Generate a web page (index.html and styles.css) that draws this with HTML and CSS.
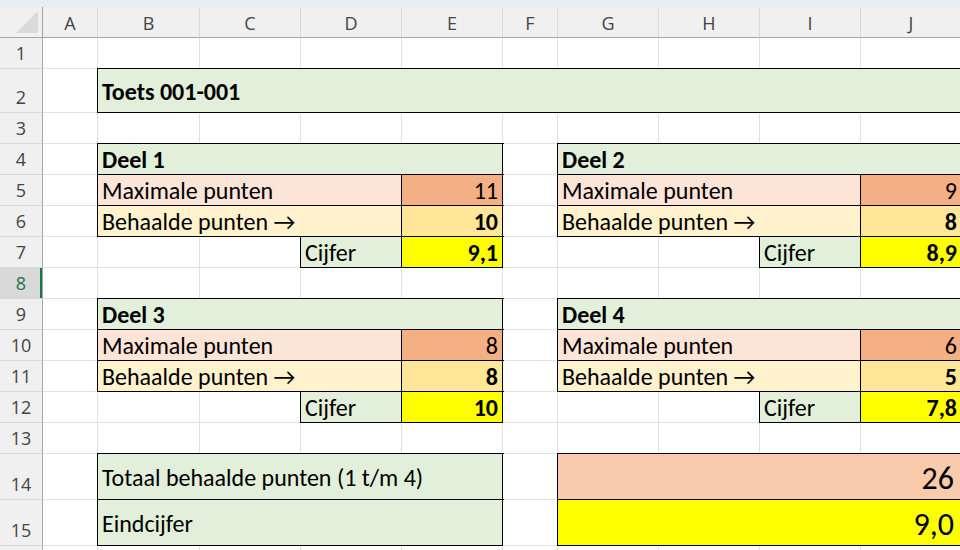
FILE: index.html
```html
<!DOCTYPE html>
<html>
	<head>
		<meta charset="UTF-8">
		<title>Toets 001-001</title>
		<link rel="stylesheet" href="styles.css">
	</head>
	<body>
		<div class="topbar"></div>
		<div class="sheet">
			<!-- kolomkoppen -->
			<div class="corner"><span class="tri"></span></div>
			<div class="ch">A</div><div class="ch">B</div><div class="ch">C</div><div class="ch">D</div><div class="ch">E</div>
			<div class="ch">F</div><div class="ch">G</div><div class="ch">H</div><div class="ch">I</div><div class="ch">J</div>

			<!-- 1 -->
			<div class="rh">1</div>
			<div class="c"></div><div class="c"></div><div class="c"></div><div class="c"></div><div class="c"></div>
			<div class="c"></div><div class="c"></div><div class="c"></div><div class="c"></div><div class="c"></div>

			<!-- 2 -->
			<div class="rh">2</div>
			<div class="c"></div>
			<div class="c box grn b span9">Toets 001-001</div>

			<!-- 3 -->
			<div class="rh">3</div>
			<div class="c"></div><div class="c"></div><div class="c"></div><div class="c"></div><div class="c"></div>
			<div class="c"></div><div class="c"></div><div class="c"></div><div class="c"></div><div class="c"></div>

			<!-- 4 -->
			<div class="rh">4</div>
			<div class="c"></div>
			<div class="c box grn b span4">Deel 1</div>
			<div class="c"></div>
			<div class="c box grn b span4">Deel 2</div>

			<!-- 5 -->
			<div class="rh">5</div>
			<div class="c"></div>
			<div class="c box sal span3">Maximale punten</div>
			<div class="c box org r">11</div>
			<div class="c"></div>
			<div class="c box sal span3">Maximale punten</div>
			<div class="c box org r">9</div>

			<!-- 6 -->
			<div class="rh">6</div>
			<div class="c"></div>
			<div class="c box lyel span3">Behaalde punten &rarr;</div>
			<div class="c box gold r b">10</div>
			<div class="c"></div>
			<div class="c box lyel span3">Behaalde punten &rarr;</div>
			<div class="c box gold r b">8</div>

			<!-- 7 -->
			<div class="rh">7</div>
			<div class="c"></div><div class="c"></div><div class="c"></div>
			<div class="c box grn">Cijfer</div>
			<div class="c box yel r b">9,1</div>
			<div class="c"></div><div class="c"></div><div class="c"></div>
			<div class="c box grn">Cijfer</div>
			<div class="c box yel r b">8,9</div>

			<!-- 8 -->
			<div class="rh sel">8</div>
			<div class="c"></div><div class="c"></div><div class="c"></div><div class="c"></div><div class="c"></div>
			<div class="c"></div><div class="c"></div><div class="c"></div><div class="c"></div><div class="c"></div>

			<!-- 9 -->
			<div class="rh">9</div>
			<div class="c"></div>
			<div class="c box grn b span4">Deel 3</div>
			<div class="c"></div>
			<div class="c box grn b span4">Deel 4</div>

			<!-- 10 -->
			<div class="rh">10</div>
			<div class="c"></div>
			<div class="c box sal span3">Maximale punten</div>
			<div class="c box org r">8</div>
			<div class="c"></div>
			<div class="c box sal span3">Maximale punten</div>
			<div class="c box org r">6</div>

			<!-- 11 -->
			<div class="rh">11</div>
			<div class="c"></div>
			<div class="c box lyel span3">Behaalde punten &rarr;</div>
			<div class="c box gold r b">8</div>
			<div class="c"></div>
			<div class="c box lyel span3">Behaalde punten &rarr;</div>
			<div class="c box gold r b">5</div>

			<!-- 12 -->
			<div class="rh">12</div>
			<div class="c"></div><div class="c"></div><div class="c"></div>
			<div class="c box grn">Cijfer</div>
			<div class="c box yel r b">10</div>
			<div class="c"></div><div class="c"></div><div class="c"></div>
			<div class="c box grn">Cijfer</div>
			<div class="c box yel r b">7,8</div>

			<!-- 13 -->
			<div class="rh">13</div>
			<div class="c"></div><div class="c"></div><div class="c"></div><div class="c"></div><div class="c"></div>
			<div class="c"></div><div class="c"></div><div class="c"></div><div class="c"></div><div class="c"></div>

			<!-- 14 -->
			<div class="rh">14</div>
			<div class="c"></div>
			<div class="c box grn span4">Totaal behaalde punten (1 t/m 4)</div>
			<div class="c"></div>
			<div class="c box tot r big span4">26</div>

			<!-- 15 -->
			<div class="rh">15</div>
			<div class="c"></div>
			<div class="c box grn span4">Eindcijfer</div>
			<div class="c"></div>
			<div class="c box yel r big span4">9,0</div>

			<!-- 16 (valt buiten beeld) -->
			<div class="rh"></div>
			<div class="c"></div><div class="c"></div><div class="c"></div><div class="c"></div><div class="c"></div>
			<div class="c"></div><div class="c"></div><div class="c"></div><div class="c"></div><div class="c"></div>
		</div>
	</body>
</html>
```

FILE: styles.css
```css
*{margin:0;padding:0;box-sizing:border-box;}
html,body{
	width:960px;
	height:550px;
	overflow:hidden;
	background:#fff;
}
.topbar{
	height:7px;
	background:#e5eff2;
}
.sheet{
	display:grid;
	grid-template-columns:43px 55px 102px 101px 101px 101px 55px 101px 101px 101px 101px;
	grid-template-rows:31px 31px 44px 31px repeat(10, 31px) 46px 46px 31px;
	width:1000px;
}

/* koppen */
.corner,.ch,.rh{
	background:#f0f0f0;
	color:#444;
	font-family:"Open Sans","Noto Sans",sans-serif;
	font-size:18px;
}
.corner{
	position:relative;
	border-right:1px solid #a6a6a6;
	border-bottom:1px solid #a6a6a6;
}
.corner .tri{
	position:absolute;
	right:4px;
	bottom:4px;
	width:0;
	height:0;
	border-left:22px solid transparent;
	border-bottom:22px solid #dadada;
}
.ch{
	display:flex;
	justify-content:center;
	align-items:center;
	border-right:1px solid #d9d9d9;
	border-bottom:1px solid #a6a6a6;
	padding-top:2px;
}
.rh{
	display:flex;
	justify-content:center;
	align-items:flex-end;
	padding-bottom:3px;
	border-right:1px solid #a6a6a6;
	border-bottom:1px solid #d9d9d9;
}
.rh.sel{
	background:#d9d9d9;
	color:#217346;
	box-shadow:inset -2px 0 0 #217346;
}

/* cellen */
.c{
	display:flex;
	align-items:center;
	padding:2px 4px 0 4px;
	background:#fff;
	border-right:1px solid #e1e1e1;
	border-bottom:1px solid #e1e1e1;
	font-family:"Carlito","Lato",sans-serif;
	font-size:24px;
	line-height:1;
	color:#000;
	white-space:nowrap;
}
.c.box{
	border-right-color:#000;
	border-bottom-color:#000;
	box-shadow:0 0 0 1px #000;
}
.span3{grid-column:span 3;}
.span4{grid-column:span 4;}
.span9{grid-column:span 9;}
.r{justify-content:flex-end;}
.b{font-weight:bold;}
.big{font-size:32px;padding:4px 7px 0 4px;}

.grn{background:#e2efda;}
.sal{background:#fce4d6;}
.org{background:#f4b084;}
.lyel{background:#fff2cc;}
.gold{background:#ffe699;}
.yel{background:#ffff00;}
.tot{background:#f8cbad;}
```
